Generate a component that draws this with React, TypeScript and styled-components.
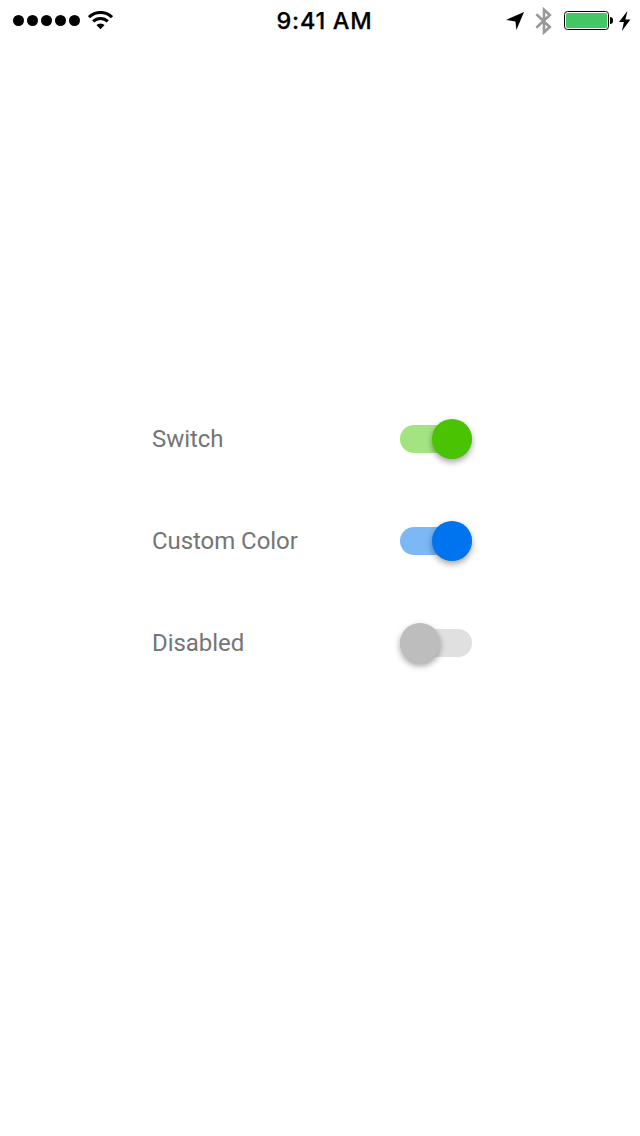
import React from "react";
import styled, { createGlobalStyle } from "styled-components";

const GlobalStyle = createGlobalStyle`
  * { box-sizing: border-box; }
  body { margin: 0; background: #fff; }
  svg { display: block; flex: none; }
`;

const Screen = styled.div`
  width: 640px;
  height: 1136px;
  display: flex;
  flex-direction: column;
  background: #fff;
`;

const StatusBar = styled.header`
  height: 40px;
  flex: none;
  display: grid;
  grid-template-columns: 1fr auto 1fr;
  align-items: start;
  padding: 0 9px 0 13px;
`;

const StatusGroup = styled.div<{ $end?: boolean }>`
  height: 41px;
  display: flex;
  align-items: center;
  justify-content: ${(p) => (p.$end ? "flex-end" : "flex-start")};
`;

const Signal = styled.div`
  display: flex;
  gap: 3px;
  margin-right: 8px;
`;

const Dot = styled.span`
  width: 11px;
  height: 11px;
  border-radius: 50%;
  background: #000;
`;

const Time = styled.time`
  font: 500 23.5px/42px Inter, sans-serif;
  letter-spacing: 0.7px;
  padding-left: 5px;
  color: #000;
  -webkit-text-stroke: 0.25px #000;
`;

const Battery = styled.div`
  display: flex;
  align-items: center;
  gap: 1px;
  margin: 0 6px 0 12px;
`;

const BatteryCase = styled.div`
  width: 45px;
  height: 19px;
  padding: 1px;
  border: 1px solid #000;
  border-radius: 3.5px;
`;

const BatteryLevel = styled.div`
  height: 100%;
  border-radius: 1.5px;
  background: #43c663;
`;

const BatteryTip = styled.div`
  width: 3px;
  height: 7px;
  border-radius: 0 3px 3px 0;
  background: #000;
`;

const Settings = styled.main`
  width: 320px;
  margin: 348px 0 0 152px;
  display: flex;
  flex-direction: column;
`;

const Row = styled.label`
  height: 102px;
  display: flex;
  align-items: center;
  justify-content: space-between;
`;

const Label = styled.span`
  font: 400 24px/28px Roboto, sans-serif;
  letter-spacing: -0.06px;
  color: #757575;
`;

const Track = styled.span<{ $color: string; $on?: boolean }>`
  width: 72px;
  height: 28px;
  border-radius: 14px;
  display: flex;
  align-items: center;
  justify-content: ${(p) => (p.$on ? "flex-end" : "flex-start")};
  background: ${(p) => p.$color};
`;

const Thumb = styled.span<{ $color: string }>`
  width: 40px;
  height: 40px;
  flex: none;
  border-radius: 50%;
  background: ${(p) => p.$color};
  box-shadow: 0 3px 6px rgba(0, 0, 0, 0.36);
`;

const items = [
  { label: "Switch", track: "#a4e480", thumb: "#4ac402", on: true },
  { label: "Custom Color", track: "#7cb8f6", thumb: "#0074ee", on: true },
  { label: "Disabled", track: "#e0e0e0", thumb: "#bdbdbd", on: false },
];

const WifiIcon = () => (
  <svg width="25" height="19" viewBox="0 0 25 19">
    <g fill="none" stroke="#000" strokeWidth="3">
      <path d="M1 6.2a16.3 16.3 0 0 1 23 0" />
      <path d="M5.2 10.4a10.4 10.4 0 0 1 14.6 0" />
    </g>
    <path d="M8.4 14.1a5.8 5.8 0 0 1 8.2 0L12.5 18.3z" />
  </svg>
);

const LocationIcon = () => (
  <svg width="18" height="18" viewBox="0 0 18 18">
    <path d="M18 0 10.4 18 9.4 9.4 0 8z" />
  </svg>
);

const BluetoothIcon = () => (
  <svg width="17" height="28" viewBox="0 0 17 28">
    <path
      d="M1.4 7.2 14.8 20 9 25.3V2.7L14.8 8 1.4 20.8"
      fill="none"
      stroke="#999"
      strokeWidth="2.6"
    />
  </svg>
);

const BoltIcon = () => (
  <svg width="12" height="20" viewBox="0 0 12 20">
    <path d="M8.4 0 0 11h4.9L2.9 20 11.4 8.4H6.4z" />
  </svg>
);

const Bluetooth = styled.div`
  margin-left: 11px;
`;

export default function App() {
  return (
    <Screen>
      <GlobalStyle />
      <StatusBar>
        <StatusGroup>
          <Signal>
            {[0, 1, 2, 3, 4].map((n) => (
              <Dot key={n} />
            ))}
          </Signal>
          <WifiIcon />
        </StatusGroup>
        <Time>9:41 AM</Time>
        <StatusGroup $end>
          <LocationIcon />
          <Bluetooth>
            <BluetoothIcon />
          </Bluetooth>
          <Battery>
            <BatteryCase>
              <BatteryLevel />
            </BatteryCase>
            <BatteryTip />
          </Battery>
          <BoltIcon />
        </StatusGroup>
      </StatusBar>
      <Settings>
        {items.map((item) => (
          <Row key={item.label}>
            <Label>{item.label}</Label>
            <Track $color={item.track} $on={item.on}>
              <Thumb $color={item.thumb} />
            </Track>
          </Row>
        ))}
      </Settings>
    </Screen>
  );
}
